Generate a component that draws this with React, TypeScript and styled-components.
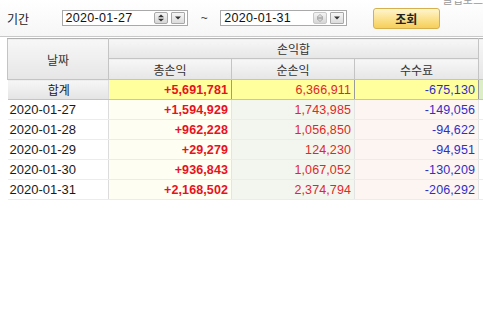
import * as React from "react";
import styled, { createGlobalStyle } from "styled-components";

const GlobalStyle = createGlobalStyle`
  html, body {
    margin: 0;
    padding: 0;
    background: #ffffff;
    overflow: hidden;
  }
  body {
    width: 483px;
    height: 309px;
    font-family: "Liberation Sans", "Noto Sans CJK KR", sans-serif;
  }
`;

const SPage = styled.div`
  width: 483px;
  height: 309px;
  overflow: hidden;
`;

const SToolbar = styled.div`
  display: flex;
  align-items: center;
  height: 37px;
  padding-left: 7px;
  box-sizing: border-box;
  border-bottom: 1px solid #c8c8c8;
  background: linear-gradient(#ffffff, #f6f6f6);
`;

const SLabel = styled.span`
  font-family: "Noto Sans CJK KR", sans-serif;
  font-size: 12px;
  color: #222;
  width: 55px;
`;

const SDateBox = styled.div`
  display: flex;
  align-items: center;
  width: 128px;
  height: 16px;
  box-sizing: border-box;
  border: 1px solid #a9a9a9;
  background: #fff;
  padding: 0 2px 0 3px;
`;

const SDateText = styled.span`
  flex: 1;
  font-size: 12.5px;
  color: #111;
  letter-spacing: 0.3px;
`;

const SSpinBtn = styled.div<{ $dim?: boolean }>`
  width: 12px;
  height: 10px;
  margin-right: 3px;
  border: 1px solid ${(p) => (p.$dim ? "#c8c8c8" : "#a8a8a8")};
  border-radius: 2px;
  background: linear-gradient(#f4f4f4, #d6d6d6);
  display: flex;
  align-items: center;
  justify-content: center;
`;

const SDropBtn = styled.div`
  width: 12px;
  height: 10px;
  border: 1px solid #a8a8a8;
  border-radius: 1px;
  background: linear-gradient(#f6f6f6, #dcdcdc);
  display: flex;
  align-items: center;
  justify-content: center;
`;

const STilde = styled.span`
  width: 32px;
  text-align: center;
  font-size: 12px;
  color: #444;
`;

const SSearchBtn = styled.button`
  margin-left: 26px;
  width: 67px;
  height: 21px;
  padding: 0;
  border: 1px solid #d6b04e;
  border-radius: 3px;
  background: linear-gradient(#fff6cf, #fbe08a 55%, #f6cf5a);
  font-family: "Noto Sans CJK KR", sans-serif;
  font-weight: 700;
  font-size: 12px;
  color: #222;
`;

const SCorner = styled.span`
  align-self: flex-start;
  margin-top: -9px;
  margin-left: 3px;
  font-family: "Noto Sans CJK KR", sans-serif;
  font-size: 11px;
  color: #9a9a9a;
  white-space: nowrap;
`;

const STable = styled.table`
  margin: 1px 0 0 7px;
  border-collapse: collapse;
  table-layout: fixed;
  width: 491px;
`;

const SHeadCell = styled.th<{ $tall?: boolean }>`
  height: ${(p) => (p.$tall ? 20 : 19)}px;
  padding: 0;
  font-family: "Noto Sans CJK KR", sans-serif;
  font-weight: 400;
  font-size: 12px;
  color: #333;
  background: linear-gradient(#f7f7f7, #e6e6e6);
  border: 1px solid #c4c4c4;
  border-top: 1px solid #b0b0b0;
  line-height: 17px;
`;

const SRow = styled.tr`
  height: 20px;
`;

const SDateCell = styled.td<{ $total?: boolean }>`
  padding: 0 0 0 2px;
  font-size: ${(p) => (p.$total ? 12 : 13)}px;
  color: #1a1a1a;
  text-align: ${(p) => (p.$total ? "center" : "left")};
  font-family: ${(p) =>
    p.$total ? `"Noto Sans CJK KR", sans-serif` : `"Liberation Sans", sans-serif`};
  background: ${(p) => (p.$total ? "linear-gradient(#f6f6f6, #e4e4e4)" : "#ffffff")};
  border-bottom: 1px solid ${(p) => (p.$total ? "#c4c4c4" : "#ececec")};
  border-right: 1px solid #dcdcdc;
`;

const tints = {
  gross: "#fefef2",
  net: "#f3f6ee",
  fee: "#fdf5f2",
  extra: "#ffffff",
};

const colors = {
  gross: "#e8121c",
  net: "#e02828",
  fee: "#3030c4",
  extra: "#333",
};

type Kind = keyof typeof tints;

const SNumCell = styled.td<{ $kind: Kind; $total?: boolean }>`
  padding: 0 3px 0 0;
  text-align: right;
  font-size: 12.5px;
  font-weight: ${(p) => (p.$kind === "gross" ? 700 : 400)};
  color: ${(p) => colors[p.$kind]};
  background: ${(p) =>
    p.$total ? (p.$kind === "extra" ? "#dbeec6" : "#ffff9e") : tints[p.$kind]};
  border-bottom: 1px solid ${(p) => (p.$total ? "#c4c4c4" : "#ececec")};
  border-right: 1px solid ${(p) => (p.$total ? "#9a9a9a" : "#e4e4e4")};
  letter-spacing: 0.1px;
`;

const SpinIcon = () => (
  <svg width="8" height="8" viewBox="0 0 8 8">
    <path d="M4 0.5 L7 3.3 L1 3.3 Z" fill="#333" />
    <path d="M4 7.5 L7 4.7 L1 4.7 Z" fill="#333" />
  </svg>
);

const SpinIconDim = () => (
  <svg width="8" height="8" viewBox="0 0 8 8">
    <path d="M4 0.5 L7 3.3 L1 3.3 Z" fill="none" stroke="#999" strokeWidth="0.8" />
    <path d="M4 7.5 L7 4.7 L1 4.7 Z" fill="none" stroke="#999" strokeWidth="0.8" />
  </svg>
);

const DropIcon = () => (
  <svg width="6" height="4" viewBox="0 0 6 4">
    <path d="M0 0.5 L6 0.5 L3 3.5 Z" fill="#333" />
  </svg>
);

type RowData = { date: string; gross: string; net: string; fee: string };

const rows: RowData[] = [
  { date: "2020-01-27", gross: "+1,594,929", net: "1,743,985", fee: "-149,056" },
  { date: "2020-01-28", gross: "+962,228", net: "1,056,850", fee: "-94,622" },
  { date: "2020-01-29", gross: "+29,279", net: "124,230", fee: "-94,951" },
  { date: "2020-01-30", gross: "+936,843", net: "1,067,052", fee: "-130,209" },
  { date: "2020-01-31", gross: "+2,168,502", net: "2,374,794", fee: "-206,292" },
];

const DateField = ({ value, dim }: { value: string; dim?: boolean }) => (
  <SDateBox>
    <SDateText>{value}</SDateText>
    <SSpinBtn $dim={dim}>{dim ? <SpinIconDim /> : <SpinIcon />}</SSpinBtn>
    <SDropBtn>
      <DropIcon />
    </SDropBtn>
  </SDateBox>
);

export default function App() {
  return (
    <SPage>
      <GlobalStyle />
      <SToolbar>
        <SLabel>기간</SLabel>
        <DateField value="2020-01-27" />
        <STilde>~</STilde>
        <DateField value="2020-01-31" dim />
        <SSearchBtn>조회</SSearchBtn>
        <SCorner>클립보드</SCorner>
      </SToolbar>
      <STable>
        <colgroup>
          <col style={{ width: 101 }} />
          <col style={{ width: 123 }} />
          <col style={{ width: 123 }} />
          <col style={{ width: 124 }} />
          <col style={{ width: 20 }} />
        </colgroup>
        <thead>
          <tr>
            <SHeadCell rowSpan={2}>날짜</SHeadCell>
            <SHeadCell colSpan={3}>손익합</SHeadCell>
            <SHeadCell rowSpan={2}></SHeadCell>
          </tr>
          <tr>
            <SHeadCell $tall>총손익</SHeadCell>
            <SHeadCell $tall>순손익</SHeadCell>
            <SHeadCell $tall>수수료</SHeadCell>
          </tr>
        </thead>
        <tbody>
          <SRow>
            <SDateCell $total>합계</SDateCell>
            <SNumCell $kind="gross" $total>+5,691,781</SNumCell>
            <SNumCell $kind="net" $total>6,366,911</SNumCell>
            <SNumCell $kind="fee" $total>-675,130</SNumCell>
            <SNumCell $kind="extra" $total></SNumCell>
          </SRow>
          {rows.map((r) => (
            <SRow key={r.date}>
              <SDateCell>{r.date}</SDateCell>
              <SNumCell $kind="gross">{r.gross}</SNumCell>
              <SNumCell $kind="net">{r.net}</SNumCell>
              <SNumCell $kind="fee">{r.fee}</SNumCell>
              <SNumCell $kind="extra"></SNumCell>
            </SRow>
          ))}
        </tbody>
      </STable>
    </SPage>
  );
}
